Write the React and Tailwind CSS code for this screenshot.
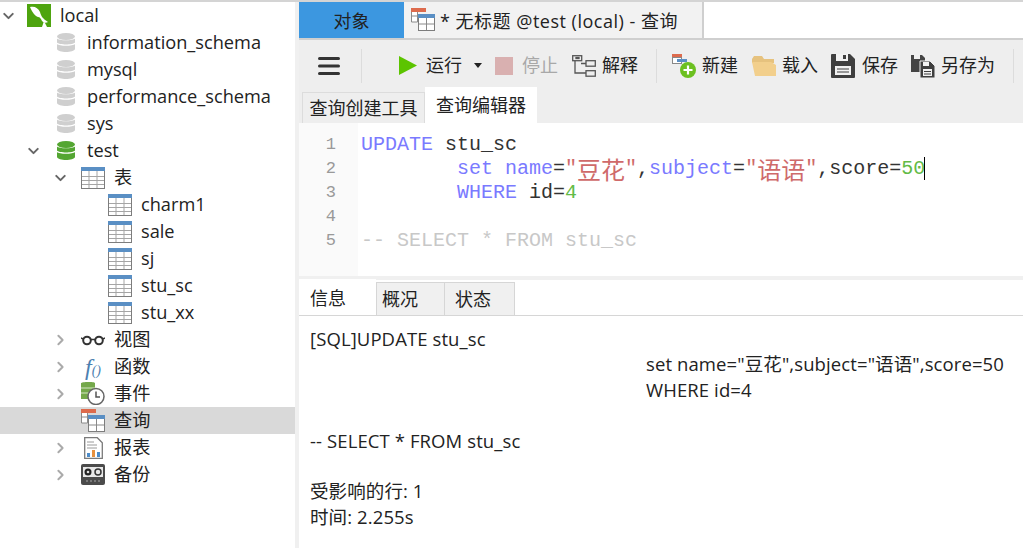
import { ChevronDown, ChevronRight } from 'lucide-react'

const cjk = "font-['Open_Sans','Noto_Sans_CJK_SC',sans-serif]"

function DbIcon({ color = '#cfcfcf' }) {
  return (
    <svg width="18" height="22" viewBox="0 0 18 22">
      <ellipse cx="9" cy="4.5" rx="9" ry="3.5" fill={color} />
      <path d="M0 6.5c2 2.4 16 2.4 18 0v4c-2 2.600-16 2.600-18 0z" fill={color} />
      <path d="M0 12c2 2.400 16 2.400 18 0v5c-1 4-17 4-18 0z" fill={color} />
    </svg>
  )
}

function MysqlLogo() {
  return (
    <svg width="24" height="23" viewBox="0 0 24 23">
      <rect width="24" height="23" fill="#4ea40f" />
      <path d="M3 3c5-1 8 1 10 5 1 4 3 7 8 10-2 1-4 1-6-1-1-2-2-4-4-4-3-1-6-5-8-10z" fill="#fff" />
      <path d="M15 23h5l-3-6z" fill="#fff" />
    </svg>
  )
}

function TableIcon() {
  return (
    <svg width="24" height="22" viewBox="0 0 24 22">
      <rect x="0.5" y="0.5" width="23" height="21" fill="#fff" stroke="#7d7d7d" />
      <rect x="0" y="0" width="24" height="4" fill="#5a8fc4" />
      <path d="M1 9.500h22M1 13.500h22M1 17.500h22M8 4v17M16 4v17" stroke="#a5a5a5" />
    </svg>
  )
}

function QueryIcon() {
  return (
    <svg width="24" height="24" viewBox="0 0 24 24">
      <rect x="0" y="0" width="15" height="4" fill="#dd6b4d" />
      <path d="M0.500 4v10h6V4" fill="#fff" stroke="#8a8a8a" />
      <path d="M0.500 8h6" stroke="#8a8a8a" />
      <rect x="7.500" y="6.500" width="16" height="16" fill="#fff" stroke="#7d7d7d" />
      <rect x="7" y="6" width="17" height="4" fill="#5a8fc4" />
      <path d="M8 16h15M15.500 10v12" stroke="#8a8a8a" />
    </svg>
  )
}

function GlassesIcon() {
  return (
    <svg width="24" height="12" viewBox="0 0 24 12">
      <circle cx="6" cy="6.500" r="3.800" fill="none" stroke="#333" strokeWidth="2" />
      <circle cx="18" cy="6.500" r="3.800" fill="none" stroke="#333" strokeWidth="2" />
      <path d="M9.500 5.500h5M2 5L0 4M22 5l2-1" stroke="#333" strokeWidth="1.500" />
    </svg>
  )
}

function FunctionIcon() {
  return (
    <span className="font-['Liberation_Serif',serif] leading-none whitespace-nowrap text-[#4d7fb0] italic">
      <span className="text-[24px]">f</span>
      <span className="text-[14px]">()</span>
    </span>
  )
}

function EventIcon() {
  return (
    <svg width="24" height="23" viewBox="0 0 24 23">
      <path d="M0 1c3-1.500 13-1.500 14 0v16H0z" fill="#74a84a" />
      <path d="M0 6h14M0 11h12" stroke="#d5e6c5" />
      <circle cx="15" cy="14.500" r="8" fill="#fff" stroke="#666" strokeWidth="1.500" />
      <path d="M15 9.500v5.500h4" fill="none" stroke="#555" strokeWidth="1.500" />
    </svg>
  )
}

function ReportIcon() {
  return (
    <svg width="19" height="22" viewBox="0 0 19 22">
      <path d="M0.700 0.700h12.600l5 5v15.600H0.700z" fill="#fff" stroke="#7a7a7a" strokeWidth="1.300" />
      <path d="M3 5h7M3 8h10M3 11h10" stroke="#9a9a9a" />
      <rect x="3" y="16" width="3" height="4" fill="#4d8cc9" />
      <rect x="8" y="13" width="3" height="7" fill="#e8913e" />
      <rect x="13" y="15" width="3" height="5" fill="#4d8cc9" />
    </svg>
  )
}

function BackupIcon() {
  return (
    <svg width="24" height="21" viewBox="0 0 24 21">
      <rect width="24" height="21" rx="2" fill="#4b4b4b" />
      <rect x="2" y="3" width="20" height="10" fill="#e8e8e8" />
      <circle cx="7" cy="8" r="3.500" fill="#222" />
      <circle cx="7" cy="8" r="1.300" fill="#ddd" />
      <circle cx="17" cy="8" r="3" fill="none" stroke="#333" strokeWidth="1.500" />
      <path d="M5 17h2M9 17h2M13 17h2M17 17h2" stroke="#aaa" />
    </svg>
  )
}

function Row({ pad, chevron, iconGap, icon, children, active }) {
  return (
    <div className={`flex h-[27px] items-center ${pad} ${active ? 'bg-[#d9d9d9]' : ''}`}>
      {chevron === 'down' && <ChevronDown size={18} strokeWidth={2.800} className="w-[17px] shrink-0 text-[#666]" />}
      {chevron === 'right' && <ChevronRight size={18} strokeWidth={2.800} className="w-[17px] shrink-0 text-[#aaa]" />}
      {chevron === 'none' && <div className="w-[17px] shrink-0" />}
      <div className={`flex w-6 shrink-0 justify-center ${iconGap}`}>{icon}</div>
      <span className="ml-[9px] text-[18.200px] leading-[27px] whitespace-nowrap text-[#222]">{children}</span>
    </div>
  )
}

function Sidebar() {
  const dbs = ['information_schema', 'mysql', 'performance_schema', 'sys']
  const tables = ['charm1', 'sale', 'sj', 'stu_sc', 'stu_xx']
  const groups = [
    { name: '视图', icon: <GlassesIcon /> },
    { name: '函数', icon: <FunctionIcon /> },
    { name: '事件', icon: <EventIcon /> },
  ]
  return (
    <aside className="flex w-[299px] shrink-0 border-r-[4px] border-[#f0f0f0]">
      <div className="w-full">
        <Row pad="pl-0" chevron="down" iconGap="ml-[10px]" icon={<MysqlLogo />}>local</Row>
        {dbs.map(name => (
          <Row key={name} pad="pl-[54px]" iconGap="" icon={<DbIcon />}>{name}</Row>
        ))}
        <Row pad="pl-[25px]" chevron="down" iconGap="ml-3" icon={<DbIcon color="#54a632" />}>test</Row>
        <Row pad="pl-[52px]" chevron="down" iconGap="ml-3" icon={<TableIcon />}>表</Row>
        {tables.map(name => (
          <Row key={name} pad="pl-[108px]" iconGap="" icon={<TableIcon />}>{name}</Row>
        ))}
        {groups.map(g => (
          <Row key={g.name} pad="pl-[52px]" chevron="right" iconGap="ml-3" icon={g.icon}>{g.name}</Row>
        ))}
        <Row pad="pl-[52px]" chevron="none" iconGap="ml-3" icon={<QueryIcon />} active>查询</Row>
        <Row pad="pl-[52px]" chevron="right" iconGap="ml-3" icon={<ReportIcon />}>报表</Row>
        <Row pad="pl-[52px]" chevron="right" iconGap="ml-3" icon={<BackupIcon />}>备份</Row>
      </div>
    </aside>
  )
}

function ToolButton({ icon, label, gap = 'gap-1.5', className = '', muted }) {
  return (
    <div className={`flex items-center ${gap} ${className}`}>
      {icon}
      <span className={`text-[18px] whitespace-nowrap ${muted ? 'text-[#a8a8a8]' : 'text-[#222]'}`}>{label}</span>
    </div>
  )
}

function Toolbar() {
  return (
    <div className="flex h-[47px] items-center bg-[#eeeeee] pt-1">
      <svg className="ml-[19px]" width="22" height="20" viewBox="0 0 22 20">
        <path d="M1.500 2.500h19M1.500 10h19M1.500 17.500h19" stroke="#333" strokeWidth="3" strokeLinecap="round" />
      </svg>
      <div className="ml-[21px] h-[34px] w-px bg-[#dcdcdc]" />
      <ToolButton
        className="ml-[37px]"
        gap="gap-[9px]"
        label="运行"
        icon={<svg width="18" height="19" viewBox="0 0 18 19"><path d="M0 0l18 9.500L0 19z" fill="#5cc400" /></svg>}
      />
      <svg className="ml-3" width="8" height="5" viewBox="0 0 8 5"><path d="M0 0h8L4 5z" fill="#222" /></svg>
      <ToolButton
        className="ml-[13px]"
        gap="gap-[9px]"
        label="停止"
        muted
        icon={<div className="h-[18px] w-[18px] bg-[#d9b0b0]" />}
      />
      <ToolButton
        className="ml-[14px]"
        label="解释"
        icon={
          <svg width="24" height="22" viewBox="0 0 24 22" fill="none" stroke="#555" strokeWidth="1.300">
            <rect x="0.700" y="0.700" width="9" height="5" />
            <rect x="4" y="2.500" width="3" height="1" />
            <rect x="14" y="5.700" width="9.300" height="5.500" />
            <rect x="14" y="15.700" width="9.300" height="5.500" />
            <path d="M3 6v12h11M9 8.500h5" />
          </svg>
        }
      />
      <div className="ml-[18px] h-[34px] w-px bg-[#dcdcdc]" />
      <ToolButton
        className="ml-[15px]"
        label="新建"
        icon={
          <svg width="24" height="24" viewBox="0 0 24 24">
            <rect x="0" y="0" width="10" height="3" fill="#dd6b4d" />
            <rect x="0.500" y="3.500" width="9" height="6" fill="#fff" stroke="#888" />
            <rect x="5" y="5" width="10" height="3" fill="#5a8fc4" />
            <circle cx="16" cy="16" r="8" fill="#6cc020" />
            <path d="M11.500 16h9M16 11.500v9" stroke="#fff" strokeWidth="2.200" />
          </svg>
        }
      />
      <ToolButton
        className="ml-[14px]"
        label="载入"
        icon={
          <svg width="24" height="20" viewBox="0 0 24 20">
            <path d="M0 3l2-3h8l2 3h10v4H0z" fill="#e6c27e" />
            <path d="M0 6h19l5 3v11H3z" fill="#f2cf8c" />
          </svg>
        }
      />
      <ToolButton
        className="ml-[13px]"
        gap="gap-[7px]"
        label="保存"
        icon={
          <svg width="24" height="24" viewBox="0 0 24 24">
            <path d="M0 1a1 1 0 011-1h18l5 5v18a1 1 0 01-1 1H1a1 1 0 01-1-1z" fill="#3f3f3f" />
            <rect x="5" y="0" width="12" height="7" fill="#f2f2f2" />
            <rect x="12" y="1" width="3" height="4" fill="#3f3f3f" />
            <rect x="4" y="12" width="16" height="9" fill="#f2f2f2" />
            <path d="M6 15h12M6 18h12" stroke="#3f3f3f" />
          </svg>
        }
      />
      <ToolButton
        className="ml-[13px]"
        label="另存为"
        icon={
          <svg width="24" height="24" viewBox="0 0 24 24">
            <path d="M0 1h11l3 3v14H0z" fill="#444" />
            <rect x="3" y="0" width="6" height="5" fill="#eee" />
            <path d="M9 7h10l5 5v12H9z" fill="#3f3f3f" stroke="#eee" />
            <rect x="12" y="15" width="9" height="7" fill="#f2f2f2" />
            <path d="M13 17.500h7M13 20h7" stroke="#3f3f3f" />
            <rect x="12" y="8" width="6" height="4" fill="#f2f2f2" />
          </svg>
        }
      />
      <div className="ml-[18px] h-[34px] w-px bg-[#dcdcdc]" />
    </div>
  )
}

function Editor() {
  const kw = 'text-[#7a7aff]'
  const str = 'text-[#cf6a6a]'
  const num = 'text-[#62bb46]'
  const zh = "inline-block h-6 w-12 align-top font-['Noto_Sans_CJK_SC',sans-serif] text-[24px] leading-[24px]"
  const lines = [
    <><span className={kw}>UPDATE</span> stu_sc</>,
    <>{'        '}<span className={kw}>set name</span>=<span className={str}>"<span className={zh}>豆花</span>"</span>,<span className={kw}>subject</span>=<span className={str}>"<span className={zh}>语语</span>"</span>,score=<span className={num}>50</span><span className="ml-[-1px] border-r border-black" /></>,
    <>{'        '}<span className={kw}>WHERE</span> id=<span className={num}>4</span></>,
    <></>,
    <span className="text-[#c8c8c8]">-- SELECT * FROM stu_sc</span>,
  ]
  return (
    <div className="flex h-[153px] bg-white font-['Liberation_Mono',monospace] text-[20px] leading-[24px]">
      <div className="w-[59px] shrink-0 bg-[#fafafa] pt-[10px] pr-[22px] text-right text-[17px] text-[#999]">
        {lines.map((_, i) => <div key={i} className="h-6">{i + 1}</div>)}
      </div>
      <div className="pt-[10px] pl-[3px] text-[#333]">
        {lines.map((line, i) => <pre key={i} className="h-6 font-['Liberation_Mono',monospace] whitespace-pre">{line}</pre>)}
      </div>
    </div>
  )
}

function Messages() {
  return (
    <div className="flex-1 bg-white pt-[10px] pl-[11px] text-[18.500px] leading-[25.400px] tracking-[0.100px] text-[#222]">
      <div>[SQL]UPDATE stu_sc</div>
      <div className="pl-[336px] whitespace-nowrap">set name="豆花",subject="语语",score=50</div>
      <div className="pl-[336px]">WHERE id=4</div>
      <div className="h-[25.400px]" />
      <div>-- SELECT * FROM stu_sc</div>
      <div className="h-[25.400px]" />
      <div>受影响的行: 1</div>
      <div>时间: 2.255s</div>
    </div>
  )
}

export default function App() {
  return (
    <div className={`flex h-[548px] w-[1023px] overflow-hidden border-t-2 border-[#d4d4d4] bg-white ${cjk}`}>
      <Sidebar />
      <main className="flex min-w-0 flex-1 flex-col">
        <div className="flex h-[38px] border-b-2 border-[#cfcfcf]">
          <div className="flex w-[105px] items-center justify-center bg-[#3c97e0] pt-[2px] text-[18px] text-[#222]">对象</div>
          <div className="flex w-[300px] items-center gap-[5px] border-r-2 border-[#cfcfcf] bg-[#f2f2f2] pl-[7px] text-[18px] tracking-[0.500px] whitespace-nowrap text-[#222]">
            <QueryIcon />
            <span className="pt-[2px]">* 无标题 @test (local) - 查询</span>
          </div>
        </div>
        <Toolbar />
        <div className="flex h-[36px] items-end bg-[#eeeeee] pl-[3px]">
          <div className="flex h-[31px] w-[123px] items-center justify-center border border-b-0 border-[#dcdcdc] text-[18px] text-[#222]">查询创建工具</div>
          <div className="flex h-[36px] w-[112px] items-center justify-center bg-white text-[18px] text-[#222]">查询编辑器</div>
        </div>
        <Editor />
        <div className="h-1 bg-[#f0f0f0]" />
        <div className="flex h-[36px] items-end border-b border-[#d6d6d6] bg-white">
          <div className="flex h-[36px] w-[77px] items-center bg-white pt-[3px] pl-[11px] text-[18px] text-[#222]">信息</div>
          <div className="flex h-[33px] w-[69px] items-center border border-b-0 border-[#d6d6d6] bg-[#f0f0f0] pl-[5px] text-[18px] text-[#222]">概况</div>
          <div className="flex h-[33px] w-[70px] items-center border border-b-0 border-l-0 border-[#d6d6d6] bg-[#f0f0f0] pl-[10px] text-[18px] text-[#222]">状态</div>
        </div>
        <Messages />
      </main>
    </div>
  )
}
